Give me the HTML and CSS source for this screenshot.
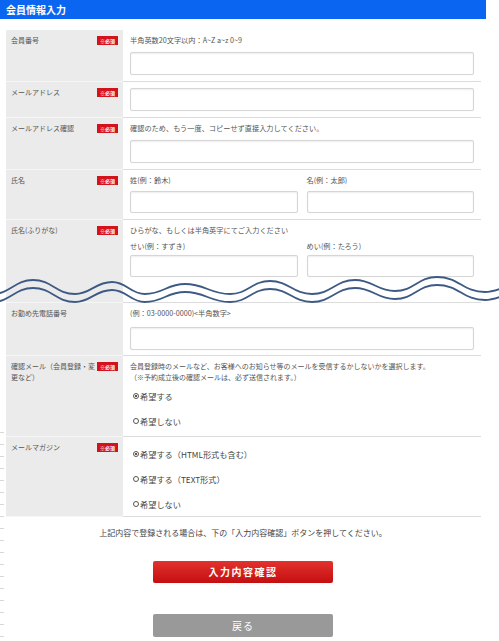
FILE: index.html
```html
<!DOCTYPE html>
<html lang="ja">
<head>
<meta charset="utf-8">
<title>会員情報入力</title>
<link rel="stylesheet" href="styles.css">
</head>
<body>
<div class="page">
  <h1 class="title">会員情報入力</h1>
  <div class="form">
    <div class="row r1">
      <div class="th"><span class="badge">※必須</span>会員番号</div>
      <div class="td"><p class="desc">半角英数20文字以内：A~Z a~z 0~9</p><div class="input"></div></div>
    </div>
    <div class="row r2">
      <div class="th"><span class="badge">※必須</span>メールアドレス</div>
      <div class="td"><div class="input"></div></div>
    </div>
    <div class="row r3">
      <div class="th"><span class="badge">※必須</span>メールアドレス確認</div>
      <div class="td"><p class="desc">確認のため、もう一度、コピーせず直接入力してください。</p><div class="input"></div></div>
    </div>
    <div class="row r4">
      <div class="th"><span class="badge">※必須</span>氏名</div>
      <div class="td">
        <div class="pair">
          <div class="half"><p class="desc">姓(例：鈴木)</p><div class="input"></div></div>
          <div class="half"><p class="desc">名(例：太郎)</p><div class="input"></div></div>
        </div>
      </div>
    </div>
    <div class="row r5">
      <div class="th"><span class="badge">※必須</span>氏名(ふりがな)</div>
      <div class="td">
        <p class="desc">ひらがな、もしくは半角英字にてご入力ください</p>
        <div class="pair">
          <div class="half"><p class="desc">せい(例：すずき)</p><div class="input"></div></div>
          <div class="half"><p class="desc">めい(例：たろう)</p><div class="input"></div></div>
        </div>
      </div>
    </div>
    <div class="row r6">
      <div class="th">お勤め先電話番号</div>
      <div class="td"><p class="desc">(例：03-0000-0000)&lt;半角数字&gt;</p><div class="input"></div></div>
    </div>
    <div class="row r7">
      <div class="th"><span class="badge">※必須</span>確認メール（会員登録・変更など）</div>
      <div class="td">
        <p class="desc two">会員登録時のメールなど、お客様へのお知らせ等のメールを受信するかしないかを選択します。<br>（※予約成立後の確認メールは、必ず送信されます。）</p>
        <div class="radio"><span class="dot on"></span>希望する</div>
        <div class="radio"><span class="dot"></span>希望しない</div>
      </div>
    </div>
    <div class="row r8">
      <div class="th"><span class="badge">※必須</span>メールマガジン</div>
      <div class="td">
        <div class="radio"><span class="dot on"></span>希望する（HTML形式も含む）</div>
        <div class="radio"><span class="dot"></span>希望する（TEXT形式）</div>
        <div class="radio"><span class="dot"></span>希望しない</div>
      </div>
    </div>
  </div>
  <p class="note">上記内容で登録される場合は、下の「入力内容確認」ボタンを押してください。</p>
  <div class="btn red">入力内容確認</div>
  <div class="btn gray">戻る</div>
</div>
<svg class="wave" width="499" height="40" viewBox="0 0 499 40">
  <path id="w" d="M -8 24 C 10 24 15 10 33 10 C 52 10 56 24 75 24 C 91 24 95 12 112 12 C 127 12 130 24 145 24 C 163 24 167 14 185 14 C 205 14 210 24 230 24 C 248 24 252 11 270 11 C 289 11 293 24 312 24 C 331 24 336 10 355 10 C 373 10 377 21 395 21 C 414 21 418 7 437 7 C 459 7 463 22 485 22 C 495 22 500 18 510 16"/>
  <use href="#w" transform="translate(0 8)"/>
</svg>
</body>
</html>
```
FILE: styles.css
```css
* { box-sizing: border-box; margin: 0; padding: 0; }
html, body { width: 499px; height: 641px; overflow: hidden; }
body {
  position: relative;
  font-family: "Noto Sans CJK JP", "Noto Sans", sans-serif;
  color: #555;
  background: #fff repeating-linear-gradient(to bottom, #d8d8d8 0 1px, transparent 1px 12px) 0 432px / 4px 210px no-repeat;
}
.page { width: 486px; }
.title {
  height: 19px;
  background: #0a66f0;
  color: #fff;
  font-size: 10px;
  font-weight: bold;
  line-height: 19px;
  padding-left: 6px;
}
.form { margin: 11px 0 0 6px; width: 475px; }
.row { display: grid; grid-template-columns: 117px 1fr; }
.th {
  background: #ebebeb;
  padding: 5px 5px 0 5px;
  font-size: 7px;
  line-height: 11px;
  border-bottom: 1px solid #f6f6f6;
  color: #555;
}
.badge {
  float: right;
  width: 21px;
  height: 9px;
  margin: 1px 0 0 1px;
  background: #d3121c;
  color: #fff;
  font-size: 5px;
  font-weight: bold;
  line-height: 9px;
  text-align: center;
}
.td {
  padding: 5px 7px 6px 7px;
  border-bottom: 1px solid #dcdcdc;
}
.desc { font-size: 7.2px; line-height: 10px; color: #555; }
.input {
  height: 23px;
  border: 1px solid #d6d6d6;
  border-radius: 2px;
  background: #fff;
  box-shadow: inset 0 1px 2px rgba(0,0,0,.07), 0 0 1px rgba(0,0,0,.08);
}
.r1 .desc, .r3 .desc { margin-bottom: 7px; }
.r2 .td { padding-top: 6px; padding-bottom: 6px; }
.pair { display: grid; grid-template-columns: 1fr 1fr; column-gap: 9px; }
.r4 .half .desc { margin-bottom: 6px; }
.r4 .input { height: 22px; }
.r5 .td { padding-bottom: 25px; }
.r5 > .td > .desc { margin-bottom: 6px; }
.r5 .half .desc { margin-bottom: 4px; }
.r5 .input { height: 22px; }
.r6 .desc { margin-bottom: 9px; }
.r6 .td { padding-bottom: 5px; }
.r7 .td { padding-bottom: 3px; }
.desc.two { line-height: 11px; font-size: 7px; }
.r8 .td { padding-top: 4px; padding-bottom: 0; }
.radio {
  height: 25px;
  display: flex;
  align-items: center;
  padding-left: 3px;
  font-size: 8.2px;
  color: #444;
}
.dot {
  width: 6px;
  height: 6px;
  border: 1px solid #555;
  border-radius: 50%;
  margin-right: 1px;
  display: flex;
  align-items: center;
  justify-content: center;
}
.dot.on::after {
  content: "";
  width: 2px;
  height: 2px;
  border-radius: 50%;
  background: #222;
}
.note {
  margin-top: 11px;
  text-align: center;
  font-size: 8px;
  line-height: 10px;
  color: #444;
}
.btn {
  width: 180px;
  margin: 0 auto;
  color: #fff;
  text-align: center;
  font-weight: bold;
  border-radius: 2px;
}
.btn.red {
  margin-top: 23px;
  height: 22px;
  line-height: 22px;
  font-size: 10px;
  letter-spacing: 1.5px;
  background: linear-gradient(#e3322e, #c40f10);
}
.btn.gray {
  margin-top: 31px;
  height: 23px;
  line-height: 23px;
  font-size: 10px;
  letter-spacing: 1px;
  background: #999;
  font-weight: normal;
}
.wave {
  position: absolute;
  left: 0;
  top: 270px;
}
.wave path, .wave use {
  fill: none;
  stroke: #3d5a84;
  stroke-width: 1.8;
}
```
